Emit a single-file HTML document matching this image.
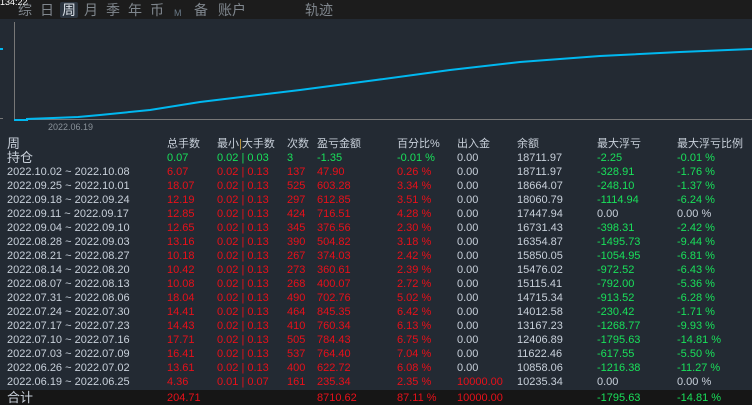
<!DOCTYPE html>
<html><head><meta charset="utf-8"><style>
*{margin:0;padding:0;box-sizing:border-box}
body{width:752px;height:405px;overflow:hidden;background:#232a33;font-family:"Liberation Sans","Noto Sans CJK SC",sans-serif;font-size:11px;position:relative}
.top{position:absolute;left:0;top:0;width:752px;height:19px;background:#1c1c1c}
.tab{position:absolute;top:2px;color:#7f868d;font-size:14px;line-height:16px}
.r{position:absolute;left:0;width:752px;height:14px;line-height:14px;white-space:nowrap}
.r span{position:absolute;top:0}
.w{color:#c8d0da}.g{color:#19e05a}.d{color:#e8101a}
.c0{left:7px}.c1{left:167px}.c2{left:217px}.c3{left:287px}.c4{left:317px}.c5{left:397px}.c6{left:457px}.c7{left:517px}.c8{left:597px}.c9{left:677px}
</style></head><body>
<div class="top"></div>
<div style="position:absolute;left:0;top:-3px;color:#fff;font-size:9px">134:22</div>
<div style="position:absolute;left:60px;top:2px;width:18px;height:16px;background:#2c3540;border-radius:2px"></div>
<div class="tab" style="left:18px">综</div>
<div class="tab" style="left:40px">日</div>
<div class="tab" style="left:62px;color:#d8dee5">周</div>
<div class="tab" style="left:84px">月</div>
<div class="tab" style="left:106px">季</div>
<div class="tab" style="left:128px">年</div>
<div class="tab" style="left:150px">币</div>
<div class="tab" style="left:174px;font-size:9px;top:5px;color:#6a7a88">M</div>
<div class="tab" style="left:194px">备</div>
<div class="tab" style="left:218px">账户</div>
<div class="tab" style="left:305px">轨迹</div>
<svg style="position:absolute;left:0;top:0" width="752" height="135">
<line x1="14.5" y1="22" x2="14.5" y2="119" stroke="#777" stroke-width="1"/>
<line x1="14" y1="119.5" x2="752" y2="119.5" stroke="#777" stroke-width="1"/>
<line x1="0" y1="49" x2="3" y2="49" stroke="#00b8f0" stroke-width="2"/>
<line x1="0" y1="118.5" x2="3" y2="118.5" stroke="#777"/>
<polyline fill="none" stroke="#00b8f0" stroke-width="2" points="14,120 27,120 27,119 53,118 78,117 100,115 150,110 200,102 300,90 376,80 450,70 520,62 600,56 680,52 752,49"/>
<text x="48" y="130" fill="#8a929a" font-size="9" font-family="Liberation Sans">2022.06.19</text>
</svg>
<div class="r" style="top:137px"><span class="c0 w" style="font-size:13px">周</span><span class="c1 w">总手数</span><span class="c2 w">最小<b style="color:#c8a040;font-weight:normal">|</b>大手数</span><span class="c3 w">次数</span><span class="c4 w">盈亏金额</span><span class="c5 w">百分比%</span><span class="c6 w">出入金</span><span class="c7 w">余额</span><span class="c8 w">最大浮亏</span><span class="c9 w">最大浮亏比例</span></div>
<div class="r" style="top:151px"><span class="c0 w" style="font-size:13px">持仓</span><span class="c1 g">0.07</span><span class="c2 g">0.02 | 0.03</span><span class="c3 g">3</span><span class="c4 g">-1.35</span><span class="c5 g">-0.01 %</span><span class="c6 w">0.00</span><span class="c7 w">18711.97</span><span class="c8 g">-2.25</span><span class="c9 g">-0.01 %</span></div>
<div class="r" style="top:165px"><span class="c0 w">2022.10.02 ~ 2022.10.08</span><span class="c1 d">6.07</span><span class="c2 d">0.02 | 0.13</span><span class="c3 d">137</span><span class="c4 d">47.90</span><span class="c5 d">0.26 %</span><span class="c6 w">0.00</span><span class="c7 w">18711.97</span><span class="c8 g">-328.91</span><span class="c9 g">-1.76 %</span></div>
<div class="r" style="top:179px"><span class="c0 w">2022.09.25 ~ 2022.10.01</span><span class="c1 d">18.07</span><span class="c2 d">0.02 | 0.13</span><span class="c3 d">525</span><span class="c4 d">603.28</span><span class="c5 d">3.34 %</span><span class="c6 w">0.00</span><span class="c7 w">18664.07</span><span class="c8 g">-248.10</span><span class="c9 g">-1.37 %</span></div>
<div class="r" style="top:193px"><span class="c0 w">2022.09.18 ~ 2022.09.24</span><span class="c1 d">12.19</span><span class="c2 d">0.02 | 0.13</span><span class="c3 d">297</span><span class="c4 d">612.85</span><span class="c5 d">3.51 %</span><span class="c6 w">0.00</span><span class="c7 w">18060.79</span><span class="c8 g">-1114.94</span><span class="c9 g">-6.24 %</span></div>
<div class="r" style="top:207px"><span class="c0 w">2022.09.11 ~ 2022.09.17</span><span class="c1 d">12.85</span><span class="c2 d">0.02 | 0.13</span><span class="c3 d">424</span><span class="c4 d">716.51</span><span class="c5 d">4.28 %</span><span class="c6 w">0.00</span><span class="c7 w">17447.94</span><span class="c8 w">0.00</span><span class="c9 w">0.00 %</span></div>
<div class="r" style="top:221px"><span class="c0 w">2022.09.04 ~ 2022.09.10</span><span class="c1 d">12.65</span><span class="c2 d">0.02 | 0.13</span><span class="c3 d">345</span><span class="c4 d">376.56</span><span class="c5 d">2.30 %</span><span class="c6 w">0.00</span><span class="c7 w">16731.43</span><span class="c8 g">-398.31</span><span class="c9 g">-2.42 %</span></div>
<div class="r" style="top:235px"><span class="c0 w">2022.08.28 ~ 2022.09.03</span><span class="c1 d">13.16</span><span class="c2 d">0.02 | 0.13</span><span class="c3 d">390</span><span class="c4 d">504.82</span><span class="c5 d">3.18 %</span><span class="c6 w">0.00</span><span class="c7 w">16354.87</span><span class="c8 g">-1495.73</span><span class="c9 g">-9.44 %</span></div>
<div class="r" style="top:249px"><span class="c0 w">2022.08.21 ~ 2022.08.27</span><span class="c1 d">10.18</span><span class="c2 d">0.02 | 0.13</span><span class="c3 d">267</span><span class="c4 d">374.03</span><span class="c5 d">2.42 %</span><span class="c6 w">0.00</span><span class="c7 w">15850.05</span><span class="c8 g">-1054.95</span><span class="c9 g">-6.81 %</span></div>
<div class="r" style="top:263px"><span class="c0 w">2022.08.14 ~ 2022.08.20</span><span class="c1 d">10.42</span><span class="c2 d">0.02 | 0.13</span><span class="c3 d">273</span><span class="c4 d">360.61</span><span class="c5 d">2.39 %</span><span class="c6 w">0.00</span><span class="c7 w">15476.02</span><span class="c8 g">-972.52</span><span class="c9 g">-6.43 %</span></div>
<div class="r" style="top:277px"><span class="c0 w">2022.08.07 ~ 2022.08.13</span><span class="c1 d">10.08</span><span class="c2 d">0.02 | 0.13</span><span class="c3 d">268</span><span class="c4 d">400.07</span><span class="c5 d">2.72 %</span><span class="c6 w">0.00</span><span class="c7 w">15115.41</span><span class="c8 g">-792.00</span><span class="c9 g">-5.36 %</span></div>
<div class="r" style="top:291px"><span class="c0 w">2022.07.31 ~ 2022.08.06</span><span class="c1 d">18.04</span><span class="c2 d">0.02 | 0.13</span><span class="c3 d">490</span><span class="c4 d">702.76</span><span class="c5 d">5.02 %</span><span class="c6 w">0.00</span><span class="c7 w">14715.34</span><span class="c8 g">-913.52</span><span class="c9 g">-6.28 %</span></div>
<div class="r" style="top:305px"><span class="c0 w">2022.07.24 ~ 2022.07.30</span><span class="c1 d">14.41</span><span class="c2 d">0.02 | 0.13</span><span class="c3 d">464</span><span class="c4 d">845.35</span><span class="c5 d">6.42 %</span><span class="c6 w">0.00</span><span class="c7 w">14012.58</span><span class="c8 g">-230.42</span><span class="c9 g">-1.71 %</span></div>
<div class="r" style="top:319px"><span class="c0 w">2022.07.17 ~ 2022.07.23</span><span class="c1 d">14.43</span><span class="c2 d">0.02 | 0.13</span><span class="c3 d">410</span><span class="c4 d">760.34</span><span class="c5 d">6.13 %</span><span class="c6 w">0.00</span><span class="c7 w">13167.23</span><span class="c8 g">-1268.77</span><span class="c9 g">-9.93 %</span></div>
<div class="r" style="top:333px"><span class="c0 w">2022.07.10 ~ 2022.07.16</span><span class="c1 d">17.71</span><span class="c2 d">0.02 | 0.13</span><span class="c3 d">505</span><span class="c4 d">784.43</span><span class="c5 d">6.75 %</span><span class="c6 w">0.00</span><span class="c7 w">12406.89</span><span class="c8 g">-1795.63</span><span class="c9 g">-14.81 %</span></div>
<div class="r" style="top:347px"><span class="c0 w">2022.07.03 ~ 2022.07.09</span><span class="c1 d">16.41</span><span class="c2 d">0.02 | 0.13</span><span class="c3 d">537</span><span class="c4 d">764.40</span><span class="c5 d">7.04 %</span><span class="c6 w">0.00</span><span class="c7 w">11622.46</span><span class="c8 g">-617.55</span><span class="c9 g">-5.50 %</span></div>
<div class="r" style="top:361px"><span class="c0 w">2022.06.26 ~ 2022.07.02</span><span class="c1 d">13.61</span><span class="c2 d">0.02 | 0.13</span><span class="c3 d">400</span><span class="c4 d">622.72</span><span class="c5 d">6.08 %</span><span class="c6 w">0.00</span><span class="c7 w">10858.06</span><span class="c8 g">-1216.38</span><span class="c9 g">-11.27 %</span></div>
<div class="r" style="top:375px"><span class="c0 w">2022.06.19 ~ 2022.06.25</span><span class="c1 d">4.36</span><span class="c2 d">0.01 | 0.07</span><span class="c3 d">161</span><span class="c4 d">235.34</span><span class="c5 d">2.35 %</span><span class="c6 d">10000.00</span><span class="c7 w">10235.34</span><span class="c8 w">0.00</span><span class="c9 w">0.00 %</span></div>
<div style="position:absolute;left:0;top:390px;width:752px;height:15px;background:#161616"></div>
<div class="r" style="top:391px"><span class="c0 w" style="font-size:13px">合计</span><span class="c1 d">204.71</span><span class="c4 d">8710.62</span><span class="c5 d">87.11 %</span><span class="c6 d">10000.00</span><span class="c8 g">-1795.63</span><span class="c9 g">-14.81 %</span></div>
</body></html>
